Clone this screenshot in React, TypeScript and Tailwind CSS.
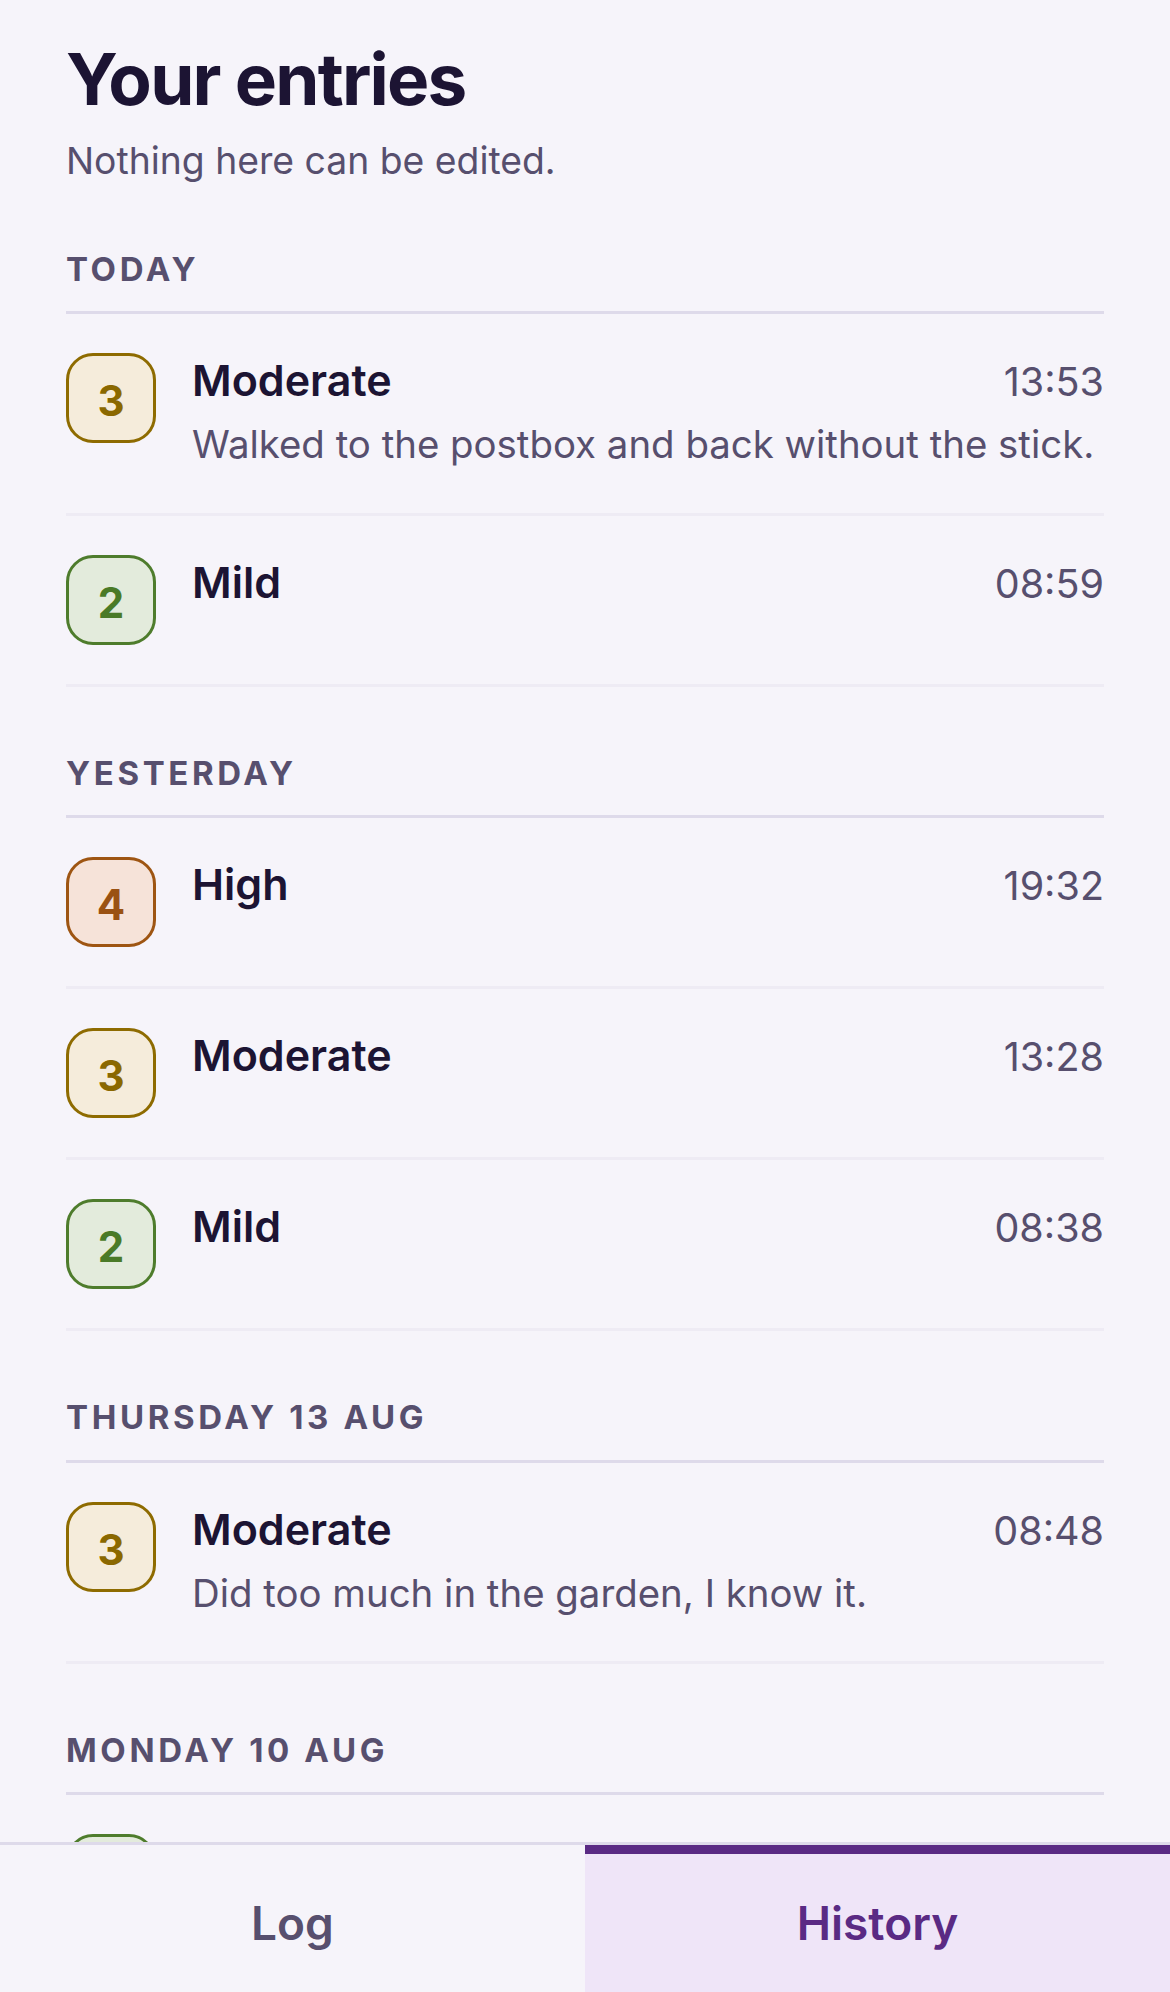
import React from "react";

type Level = 2 | 3 | 4;

const levelStyles: Record<Level, { label: string; box: string }> = {
  2: { label: "Mild", box: "border-[#4e7c2c] bg-[#e3ebdc] text-[#4a7a27]" },
  3: { label: "Moderate", box: "border-[#8e6b00] bg-[#f5ecdb] text-[#8a6800]" },
  4: { label: "High", box: "border-[#9e5512] bg-[#f6e3d9] text-[#9a5213]" },
};

type Entry = { level: Level; time: string; note?: string };
type Group = { title: string; entries: Entry[] };

const groups: Group[] = [
  {
    title: "Today",
    entries: [
      { level: 3, time: "13:53", note: "Walked to the postbox and back without the stick." },
      { level: 2, time: "08:59" },
    ],
  },
  {
    title: "Yesterday",
    entries: [
      { level: 4, time: "19:32" },
      { level: 3, time: "13:28" },
      { level: 2, time: "08:38" },
    ],
  },
  {
    title: "Thursday 13 Aug",
    entries: [{ level: 3, time: "08:48", note: "Did too much in the garden, I know it." }],
  },
  {
    title: "Monday 10 Aug",
    entries: [
      { level: 2, time: "09:12" },
      { level: 3, time: "14:05" },
    ],
  },
];

function Row({ entry }: { entry: Entry }) {
  const s = levelStyles[entry.level];
  return (
    <li className="flex gap-[36px] border-b-[3px] border-[#eeebf4] pt-[39px] pb-[39px]">
      <div
        className={`flex h-[90px] w-[90px] shrink-0 items-center justify-center rounded-[27px] border-[3px] pt-[6px] text-[42px] font-bold leading-none ${s.box}`}
      >
        {entry.level}
      </div>
      <div className="min-w-0 flex-1">
        <div className="flex items-baseline justify-between">
          <span className="text-[43px] font-semibold leading-[54px] text-[#1c1433]">{s.label}</span>
          <span className="text-[39.5px] leading-[54px] text-[#574f6e]">{entry.time}</span>
        </div>
        {entry.note && (
          <p className="mt-[6px] whitespace-nowrap text-[38.4px] leading-[1.52] text-[#574f6e]">{entry.note}</p>
        )}
      </div>
    </li>
  );
}

export default function App() {
  return (
    <div
      className="flex h-[1992px] w-full flex-col overflow-hidden bg-[#f6f4fa]"
      style={{ fontFamily: "Inter, 'Noto Sans', 'Liberation Sans', sans-serif" }}
    >
      <main className="min-h-0 flex-1 overflow-hidden px-[66px] pt-[36px]">
        <h1 className="text-[71px] font-bold leading-[1.22] tracking-[-0.025em] text-[#1c1433]">
          Your entries
        </h1>
        <p className="mt-[9px] text-[37.3px] leading-[1.53] text-[#574f6e]">Nothing here can be edited.</p>

        {groups.map((g, i) => (
          <section key={g.title} className={i === 0 ? "mt-[56px]" : "mt-[62px]"}>
            <h2 className="border-b-[3px] border-[#dedaea] pb-[17px] text-[33px] font-bold uppercase leading-[1.5] tracking-[0.11em] text-[#574f6e]">
              {g.title}
            </h2>
            <ul>
              {g.entries.map((e, j) => (
                <Row key={j} entry={e} />
              ))}
            </ul>
          </section>
        ))}
      </main>

      <nav className="flex h-[150px] shrink-0 border-t-[3px] border-[#dedaea]">
        <button className="flex flex-1 items-center justify-center border-t-[9px] border-transparent bg-[#f6f4fa] text-[46px] font-semibold text-[#574f6e]">
          Log
        </button>
        <button className="flex flex-1 items-center justify-center border-t-[9px] border-[#5a2a84] bg-[#efe5f8] text-[46px] font-semibold text-[#5a2a84]">
          History
        </button>
      </nav>
    </div>
  );
}
